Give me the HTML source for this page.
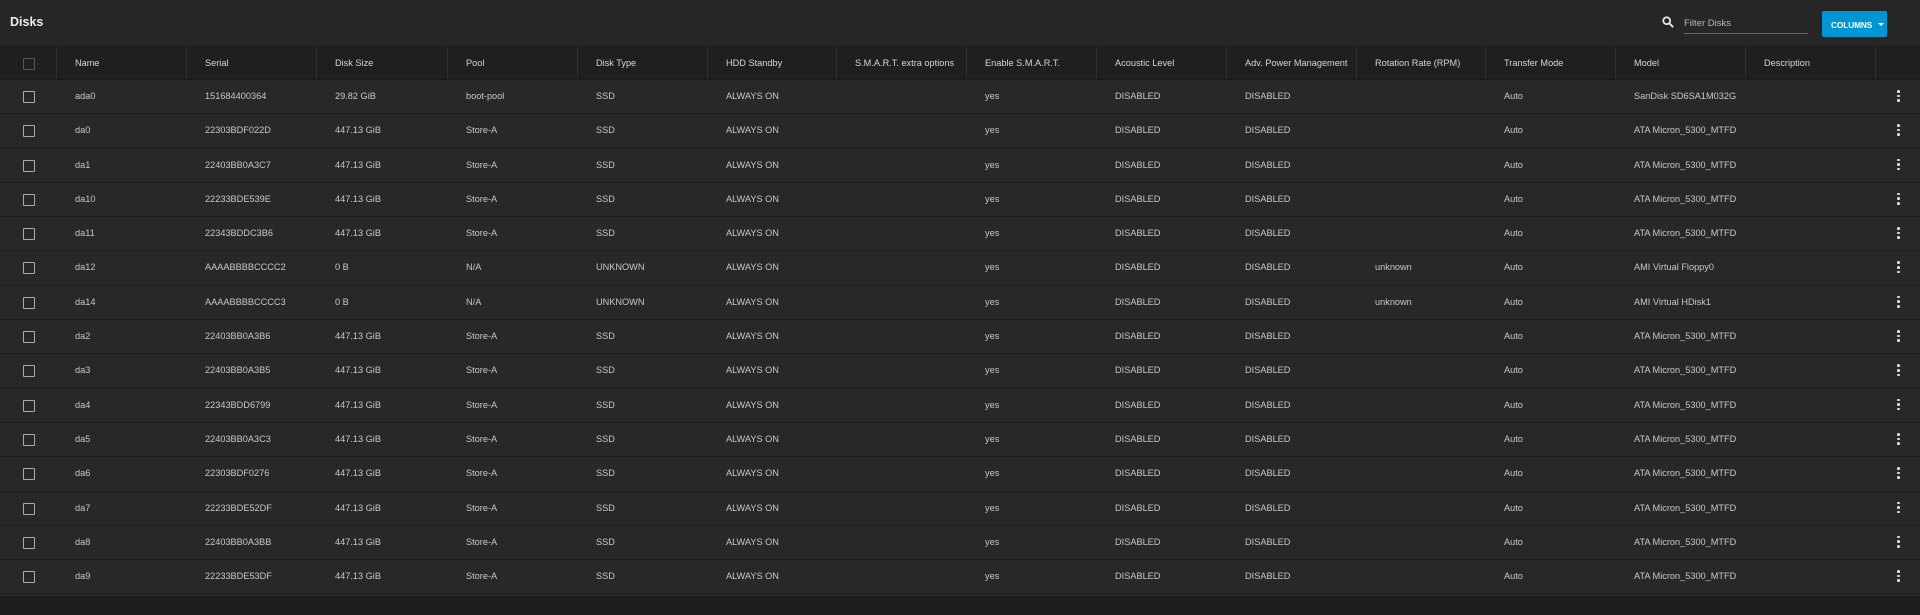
<!DOCTYPE html>
<html><head><meta charset="utf-8"><style>
*{margin:0;padding:0;box-sizing:border-box}
body{width:1920px;height:615px;background:#1e1e1e;font-family:"Liberation Sans",sans-serif;overflow:hidden;color:#d8d8d8}
.top{position:absolute;left:0;top:0;width:1920px;height:47px;background:#262626;border-bottom:1px solid #1c1c1c}
.title{position:absolute;left:10px;top:15px;font-size:12.5px;font-weight:bold;color:#ececec}
.search{position:absolute;left:1662px;top:16px;width:12px;height:12px}
.ftxt{position:absolute;left:1684px;top:18px;font-size:9.5px;color:#bbb}
.uline{position:absolute;left:1684px;top:33px;width:124px;height:1px;background:#666}
.btn{position:absolute;left:1822px;top:11px;width:65px;height:26px;background:#0095d5;border-radius:2px;color:#fff;font-size:8.3px;font-weight:bold}
.btn span{position:absolute;left:9px;top:9px;letter-spacing:-0.1px}
.btn i{position:absolute;left:56px;top:11.5px;border-left:3px solid transparent;border-right:3px solid transparent;border-top:3px solid #fff}
.tbl{position:absolute;left:0;top:47px;width:1920px;height:549px;background:#282828}
.row{position:relative;height:34.3px;border-bottom:1px solid #202020;font-size:9.2px;color:#c8c8c8}
.hdr{height:33px;background:#1f1f1f;color:#d6d6d6;border-bottom:1px solid #1a1a1a}
.c{position:absolute;top:0;height:100%;line-height:33px;padding-left:19px;white-space:nowrap;overflow:hidden}
.hdr .c{border-left:1px solid #2e2e2e;line-height:33px;padding-left:18px}
.cb{position:absolute;left:23px;top:11px;width:12px;height:12px;border:1.5px solid #aaa;border-radius:1px}
.hdr .cb{border-color:#555}
.keb{position:absolute;left:1897px;top:10px;width:3px;height:13px}
.keb b{display:block;width:2.6px;height:2.6px;background:#ddd;border-radius:50%;margin-bottom:2px}
</style></head><body>
<div class="top">
<div class="title">Disks</div>
<svg class="search" viewBox="0 0 14 14"><circle cx="5.5" cy="5.5" r="4" fill="none" stroke="#eee" stroke-width="2"/><path d="M8.5 8.5L13 13" stroke="#eee" stroke-width="2.2"/></svg>
<div class="ftxt">Filter Disks</div><div class="uline"></div>
<div class="btn"><span>COLUMNS</span><i></i></div>
</div>
<div class="tbl" id="t"></div>
<script>
var cols=["Name","Serial","Disk Size","Pool","Disk Type","HDD Standby","S.M.A.R.T. extra options","Enable S.M.A.R.T.","Acoustic Level","Adv. Power Management","Rotation Rate (RPM)","Transfer Mode","Model","Description"];
var M="ATA Micron_5300_MTFDDAK480TDS";
var rows=[
["ada0","151684400364","29.82 GiB","boot-pool","SSD","","SanDisk SD6SA1M032G"],
["da0","22303BDF022D","447.13 GiB","Store-A","SSD","",M],
["da1","22403BB0A3C7","447.13 GiB","Store-A","SSD","",M],
["da10","22233BDE539E","447.13 GiB","Store-A","SSD","",M],
["da11","22343BDDC3B6","447.13 GiB","Store-A","SSD","",M],
["da12","AAAABBBBCCCC2","0 B","N/A","UNKNOWN","unknown","AMI Virtual Floppy0"],
["da14","AAAABBBBCCCC3","0 B","N/A","UNKNOWN","unknown","AMI Virtual HDisk1"],
["da2","22403BB0A3B6","447.13 GiB","Store-A","SSD","",M],
["da3","22403BB0A3B5","447.13 GiB","Store-A","SSD","",M],
["da4","22343BDD6799","447.13 GiB","Store-A","SSD","",M],
["da5","22403BB0A3C3","447.13 GiB","Store-A","SSD","",M],
["da6","22303BDF0276","447.13 GiB","Store-A","SSD","",M],
["da7","22233BDE52DF","447.13 GiB","Store-A","SSD","",M],
["da8","22403BB0A3BB","447.13 GiB","Store-A","SSD","",M],
["da9","22233BDE53DF","447.13 GiB","Store-A","SSD","",M]];
var L=[56,186,316,447,577,707,836,966,1096,1226,1356,1485,1615,1745,1875];
function cell(i,t,hd){var w=L[i+1]-L[i];if(!hd&&i==12)w-=8;return '<div class="c" style="left:'+L[i]+'px;width:'+w+'px">'+t+'</div>';}
var h='<div class="row hdr"><div class="cb"></div>';
for(var i=0;i<14;i++)h+=cell(i,cols[i],1);
h+='<div class="c" style="left:1875px;width:45px"></div></div>';
rows.forEach(function(r){
var v=[r[0],r[1],r[2],r[3],r[4],"ALWAYS ON","","yes","DISABLED","DISABLED",r[5],"Auto",r[6],""];
h+='<div class="row"><div class="cb"></div>';
for(var i=0;i<14;i++)h+=cell(i,v[i],0);
h+='<div class="keb"><b></b><b></b><b></b></div></div>';});
document.getElementById('t').innerHTML=h;
</script>
</body></html>
